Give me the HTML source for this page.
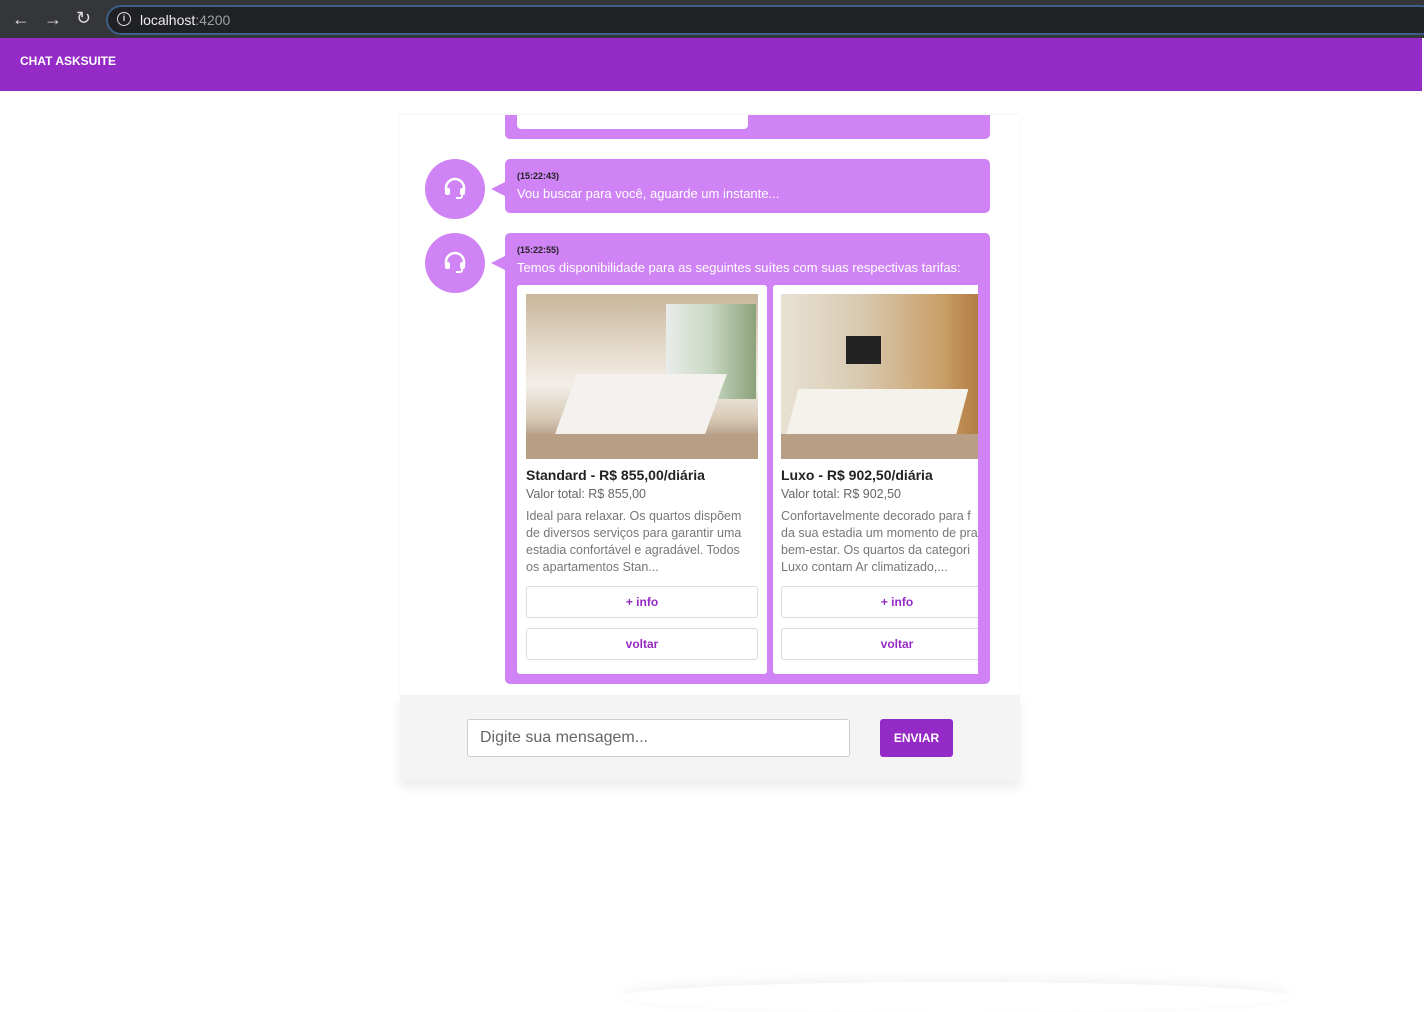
<!DOCTYPE html>
<html><head><style>
*{box-sizing:border-box;margin:0;padding:0}
body{width:1424px;height:991px;background:#fff;font-family:"Liberation Sans",sans-serif;position:relative;overflow:hidden}
.abs{position:absolute}
.bar{left:0;top:0;width:1424px;height:38px;background:#35363a}
.url{left:106px;top:5px;width:1330px;height:30px;border-radius:15px;background:#202124;border:2px solid #3b5f86}
.hdr{left:0;top:38px;width:1422px;height:53px;background:#952bc6;color:#fff;font-weight:bold;font-size:12px}
.panel{left:400px;top:115px;width:620px;height:580px;background:#fff;overflow:hidden;box-shadow:0 -1px 3px rgba(0,0,0,.05)}
.foot{left:400px;top:695px;width:620px;height:86px;background:#f4f4f4;box-shadow:0 6px 10px rgba(0,0,0,.08)}
.bub{background:#cf83f5;border-radius:5px;color:#fff}
.av{width:60px;height:60px;border-radius:50%;background:#cf83f5}
.ts{font-size:9px;color:#222;font-weight:bold}
.msg{font-size:13px}
.card{background:#fff;border-radius:3px;overflow:hidden}
.t{font-size:14px;font-weight:bold;color:#222}
.s{font-size:12.5px;color:#666}
.d{font-size:12.5px;color:#777;line-height:17px;white-space:nowrap}
.btn{border:1px solid #ddd;border-radius:3px;height:32px;text-align:center;line-height:30px;color:#952bc6;font-weight:bold;font-size:12px;background:#fff}
</style></head><body>
<div class="abs bar"></div>
<div class="abs" style="left:12px;top:9px;color:#ddd;font-size:18px">&#8592;</div>
<div class="abs" style="left:44px;top:9px;color:#ddd;font-size:18px">&#8594;</div>
<div class="abs" style="left:76px;top:8px;color:#ddd;font-size:18px">&#8635;</div>
<div class="abs url"></div>
<div class="abs" style="left:117px;top:12px;width:14px;height:14px;border:1.5px solid #ddd;border-radius:50%;color:#ddd;font-size:9px;text-align:center;line-height:11px;font-weight:bold">i</div>
<div class="abs" style="left:140px;top:12px;color:#eee;font-size:14px">localhost<span style="color:#9aa0a6">:4200</span></div>
<div class="abs hdr"><div style="position:absolute;left:20px;top:16px">CHAT ASKSUITE</div></div>
<div class="abs panel"></div>
<div class="abs bub" style="left:505px;top:115px;width:485px;height:24px;border-radius:0 0 5px 5px"></div>
<div class="abs" style="left:517px;top:115px;width:231px;height:14px;background:#fff;border-radius:0 0 4px 4px"></div>

<div class="abs av" style="left:425px;top:159px"></div>
<svg class="abs" style="left:442px;top:176px" width="26" height="26" viewBox="0 0 26 26"><path d="M4 15 V12 a9 9 0 0 1 18 0 V15" fill="none" stroke="#fff" stroke-width="2.5"/><rect x="3" y="12" width="5" height="7" rx="2" fill="#fff"/><rect x="18" y="12" width="5" height="7" rx="2" fill="#fff"/><path d="M20 18 v2 a2 2 0 0 1 -2 2 h-4" fill="none" stroke="#fff" stroke-width="2"/></svg>
<div class="abs" style="left:491px;top:182px;width:0;height:0;border-top:7px solid transparent;border-bottom:7px solid transparent;border-right:14px solid #cf83f5"></div>
<div class="abs bub" style="left:505px;top:159px;width:485px;height:54px"><div class="ts" style="position:absolute;left:12px;top:12px">(15:22:43)</div><div class="msg" style="position:absolute;left:12px;top:27px">Vou buscar para você, aguarde um instante...</div></div>

<div class="abs av" style="left:425px;top:233px"></div>
<svg class="abs" style="left:442px;top:250px" width="26" height="26" viewBox="0 0 26 26"><path d="M4 15 V12 a9 9 0 0 1 18 0 V15" fill="none" stroke="#fff" stroke-width="2.5"/><rect x="3" y="12" width="5" height="7" rx="2" fill="#fff"/><rect x="18" y="12" width="5" height="7" rx="2" fill="#fff"/><path d="M20 18 v2 a2 2 0 0 1 -2 2 h-4" fill="none" stroke="#fff" stroke-width="2"/></svg>
<div class="abs" style="left:491px;top:256px;width:0;height:0;border-top:7px solid transparent;border-bottom:7px solid transparent;border-right:14px solid #cf83f5"></div>
<div class="abs bub" style="left:505px;top:233px;width:485px;height:451px"><div class="ts" style="position:absolute;left:12px;top:12px">(15:22:55)</div><div class="msg" style="position:absolute;left:12px;top:27px">Temos disponibilidade para as seguintes suítes com suas respectivas tarifas:</div></div>

<div class="abs card" style="left:517px;top:285px;width:250px;height:389px">
<div style="position:absolute;left:9px;top:9px;width:232px;height:165px;overflow:hidden;background:linear-gradient(180deg,#c9b69b 0%,#e6dccd 35%,#f2eee8 55%,#d9cbb8 75%,#8b6a4e 100%)">
<div style="position:absolute;left:140px;top:10px;width:90px;height:95px;background:linear-gradient(90deg,#e9ecea,#c9d7c2,#8aa27a)"></div>
<div style="position:absolute;left:40px;top:80px;width:150px;height:60px;background:#f4f2ee;transform:skewX(-20deg)"></div>
<div style="position:absolute;left:0;top:140px;width:232px;height:25px;background:#b89e84"></div></div>
<div class="t" style="position:absolute;left:9px;top:182px">Standard - R$ 855,00/diária</div>
<div class="s" style="position:absolute;left:9px;top:202px">Valor total: R$ 855,00</div>
<div class="d" style="position:absolute;left:9px;top:223px">Ideal para relaxar. Os quartos dispõem<br>de diversos serviços para garantir uma<br>estadia confortável e agradável. Todos<br>os apartamentos Stan...</div>
<div class="btn" style="position:absolute;left:9px;top:301px;width:232px">+ info</div>
<div class="btn" style="position:absolute;left:9px;top:343px;width:232px">voltar</div>
</div>
<div class="abs card" style="left:773px;top:285px;width:205px;height:389px;border-radius:3px 0 0 3px">
<div style="position:absolute;left:8px;top:9px;width:200px;height:165px;overflow:hidden;background:linear-gradient(90deg,#e8e2d4 0%,#d8c9b0 40%,#caa06a 80%,#b07a40 100%)">
<div style="position:absolute;left:65px;top:42px;width:35px;height:28px;background:#222"></div>
<div style="position:absolute;left:10px;top:95px;width:170px;height:55px;background:#f5f2ec;transform:skewX(-15deg)"></div>
<div style="position:absolute;left:0;top:140px;width:200px;height:25px;background:#b89e84"></div></div>
<div class="t" style="position:absolute;left:8px;top:182px;white-space:nowrap">Luxo - R$ 902,50/diária</div>
<div class="s" style="position:absolute;left:8px;top:202px">Valor total: R$ 902,50</div>
<div class="d" style="position:absolute;left:8px;top:223px">Confortavelmente decorado para f<br>da sua estadia um momento de pra<br>bem-estar. Os quartos da categori<br>Luxo contam Ar climatizado,...</div>
<div class="btn" style="position:absolute;left:8px;top:301px;width:232px">+ info</div>
<div class="btn" style="position:absolute;left:8px;top:343px;width:232px">voltar</div>
</div>

<div class="abs foot"></div>
<div class="abs" style="left:467px;top:719px;width:383px;height:38px;background:#fff;border:1px solid #ccc;border-radius:3px;color:#666;font-size:16px;padding:9px 12px">Digite sua mensagem...</div>
<div class="abs" style="left:880px;top:719px;width:73px;height:38px;background:#952bc6;border-radius:3px;color:#fff;font-weight:bold;font-size:12px;text-align:center;line-height:38px">ENVIAR</div>
<div class="abs" style="left:620px;top:982px;width:670px;height:30px;border-radius:50%;box-shadow:0 -3px 12px rgba(0,0,0,.06)"></div>
</body></html>
